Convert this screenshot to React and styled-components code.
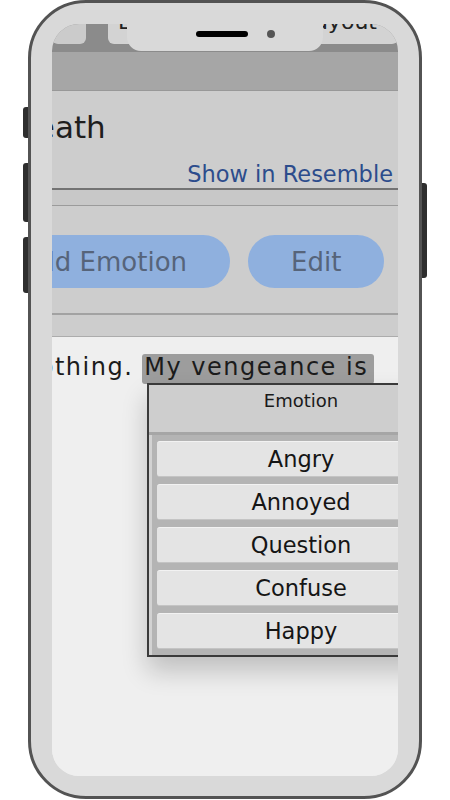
import styled, { createGlobalStyle } from "styled-components";

const GlobalStyle = createGlobalStyle`
  html, body {
    margin: 0;
    padding: 0;
    background: #ffffff;
  }
  body {
    font-family: "DejaVu Sans", "Liberation Sans", sans-serif;
  }
`;

const Page = styled.div`
  width: 450px;
  height: 800px;
`;

const Phone = styled.div`
  position: relative;
  box-sizing: border-box;
  margin-left: 28px;
  width: 394px;
  height: 799px;
  padding: 21px 21px 20px;
  border: 3px solid #535353;
  border-radius: 58px;
  background: #d9d9d9;
`;

const SideButton = styled.div`
  position: absolute;
  top: ${(p) => p.$top}px;
  ${(p) =>
    p.$side === "left"
      ? "left: -8px; border-radius: 3px 0 0 3px;"
      : "right: -8px; border-radius: 0 3px 3px 0;"}
  width: 5px;
  height: ${(p) => p.$height}px;
  background: #2e2e2e;
`;

const Notch = styled.div`
  position: absolute;
  z-index: 5;
  left: 96px;
  top: 18px;
  box-sizing: border-box;
  width: 196px;
  height: 30px;
  padding: 10px 0 0 69px;
  display: flex;
  align-items: flex-start;
  gap: 19px;
  background: #d9d9d9;
  border-radius: 0 0 14px 14px;
`;

const Speaker = styled.div`
  width: 52px;
  height: 6px;
  border-radius: 3px;
  background: #000;
`;

const Camera = styled.div`
  width: 8px;
  height: 8px;
  margin-top: -1px;
  border-radius: 50%;
  background: #555;
`;

const Screen = styled.div`
  position: relative;
  height: 100%;
  overflow: hidden;
  border-radius: 27px;
  background: #efefef;
  display: flex;
  flex-direction: column;
`;

const TabBar = styled.div`
  flex-shrink: 0;
  height: 28px;
  display: flex;
  gap: 22px;
  background: #8b8b8b;
  overflow: hidden;
`;

const Tab = styled.div`
  flex: ${(p) => (p.$grow ? "1" : "0 0 34px")};
  height: 20px;
  display: flex;
  justify-content: space-between;
  padding: ${(p) => (p.$grow ? "0 21px 0 10px" : "0")};
  border-radius: 0 0 6px 6px;
  background: ${(p) => (p.$grow ? "#d3d3d3" : "#cbcbcb")};
  color: #222;
  font-size: 22px;
  line-height: 22px;
  overflow: hidden;
`;

const TabLabel = styled.span`
  margin-top: -13px;
  white-space: nowrap;
`;

const Toolbar = styled.div`
  flex-shrink: 0;
  height: 38px;
  background: #a6a6a6;
  border-bottom: 1px solid #989898;
`;

const Header = styled.div`
  flex-shrink: 0;
  display: flex;
  flex-direction: column;
  padding: 18px 5px 1px 0;
  background: #cdcdcd;
  border-bottom: 2px solid #737373;
`;

const Title = styled.div`
  margin-left: -40px;
  font-size: 31px;
  line-height: 36px;
  color: #1e1e1e;
  white-space: nowrap;
`;

const Link = styled.div`
  align-self: flex-end;
  margin-top: 16px;
  font-size: 22.5px;
  line-height: 26px;
  color: #2c4c8c;
  white-space: nowrap;
`;

const Band = styled.div`
  flex-shrink: 0;
  height: ${(p) => p.$height}px;
  background: ${(p) => p.$bg};
  border-bottom: 1px solid ${(p) => p.$line};
`;

const ButtonBar = styled.div`
  flex-shrink: 0;
  display: flex;
  gap: 18px;
  padding: 29px 0 25px;
  background: #cdcdcd;
  border-bottom: 2px solid #a2a2a2;
`;

const Pill = styled.div`
  flex-shrink: 0;
  height: 53px;
  display: flex;
  align-items: center;
  margin-left: ${(p) => p.$offset || 0}px;
  padding: 0 43px;
  border-radius: 27px;
  background: #8fb0de;
  color: #56647a;
  font-size: 26px;
  white-space: nowrap;
`;

const Body = styled.div`
  position: relative;
  flex: 1;
  padding-top: 15px;
  background: #efefef;
`;

const TextLine = styled.div`
  margin-left: -30px;
  font-size: 24px;
  letter-spacing: 1.5px;
  line-height: 30px;
  color: #1b1b1b;
  white-space: nowrap;
`;

const Highlight = styled.span`
  display: inline-block;
  height: 30px;
  line-height: 27.4px;
  margin-left: 9px;
  padding: 0 6px 0 2px;
  border-radius: 3px;
  background: #9d9d9d;
`;

const Popup = styled.div`
  position: absolute;
  top: 46px;
  left: 95px;
  width: 304px;
  border: 2px solid #3a3a3a;
  border-right: none;
  background: #b4b4b4;
  box-shadow: 0 14px 24px rgba(0, 0, 0, 0.2);
`;

const PopupHeader = styled.div`
  box-sizing: border-box;
  height: 50px;
  padding-top: 5px;
  background: #cecece;
  border-bottom: 3px solid #a6a6a6;
  text-align: center;
  font-size: 18px;
  line-height: 22px;
  color: #1a1a1a;
`;

const List = styled.div`
  display: flex;
  flex-direction: column;
  gap: 7px;
  padding: 6px 8px;
  box-shadow: inset 3px 0 0 #d2d2d2;
`;

const Item = styled.div`
  box-sizing: border-box;
  height: 36px;
  border-radius: 3px;
  border-top: 1px solid #f2f2f2;
  border-bottom: 1px solid #c4c4c4;
  background: #e4e4e4;
  text-align: center;
  font-size: 22.5px;
  line-height: 35px;
  color: #151515;
`;

const emotions = ["Angry", "Annoyed", "Question", "Confuse", "Happy"];

export default function App() {
  return (
    <Page>
      <GlobalStyle />
      <Phone>
        <SideButton $side="left" $top={104} $height={31} />
        <SideButton $side="left" $top={160} $height={59} />
        <SideButton $side="left" $top={234} $height={56} />
        <SideButton $side="right" $top={180} $height={95} />
        <Notch>
          <Speaker />
          <Camera />
        </Notch>
        <Screen>
          <TabBar>
            <Tab />
            <Tab $grow>
              <TabLabel>Lines</TabLabel>
              <TabLabel>Layout</TabLabel>
            </Tab>
          </TabBar>
          <Toolbar />
          <Header>
            <Title>Death</Title>
            <Link>Show in Resemble</Link>
          </Header>
          <Band $height={15} $bg="#c8c8c8" $line="#9b9b9b" />
          <ButtonBar>
            <Pill $offset={-74}>Add Emotion</Pill>
            <Pill>Edit</Pill>
          </ButtonBar>
          <Band $height={21} $bg="#cdcdcd" $line="#acacac" />
          <Body>
            <TextLine>
              nothing.<Highlight>My vengeance is</Highlight>
            </TextLine>
            <Popup>
              <PopupHeader>Emotion</PopupHeader>
              <List>
                {emotions.map((e) => (
                  <Item key={e}>{e}</Item>
                ))}
              </List>
            </Popup>
          </Body>
        </Screen>
      </Phone>
    </Page>
  );
}
